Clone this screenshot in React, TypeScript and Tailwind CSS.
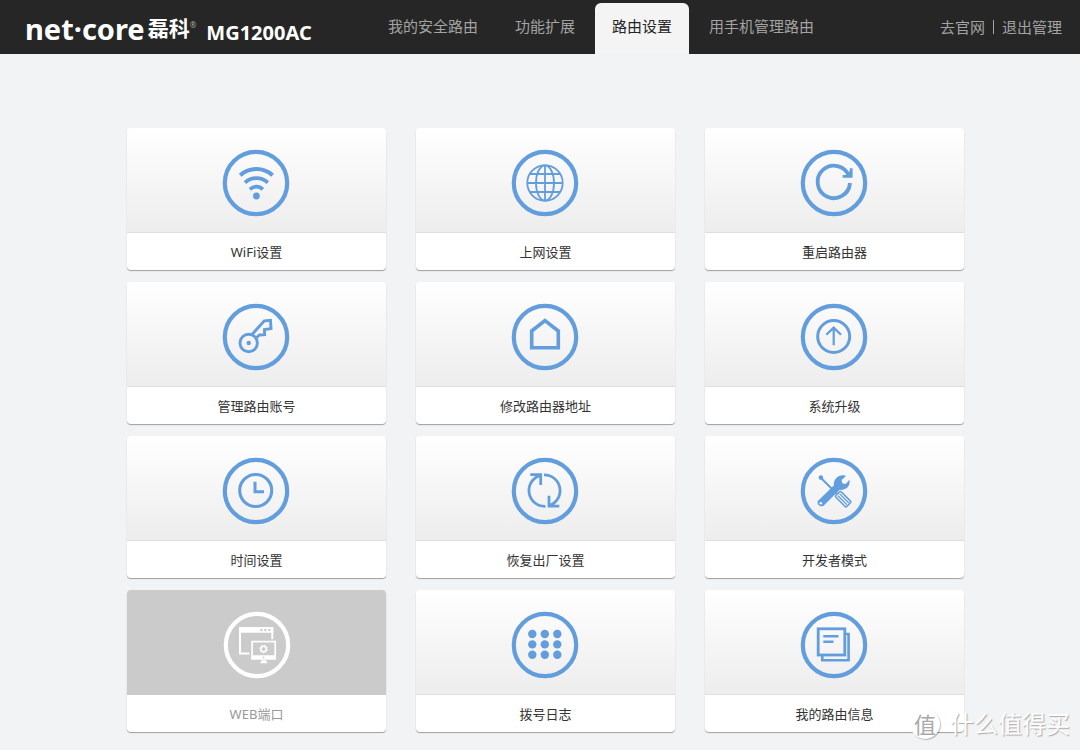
import type { ReactNode } from 'react';

const navItems = [
    { title: '我的安全路由', href: '#safe' },
    { title: '功能扩展', href: '#extend' },
    { title: '路由设置', href: '#settings', active: true },
    { title: '用手机管理路由', href: '#mobile' },
];

// all icons are drawn on a 68x68 canvas, the outer ring is shared
const icons: Record<string, ReactNode> = {
    wifi: (
        <>
            <path d="M18.2 26.2A24.3 24.3 0 0 1 50.6 26.2" strokeWidth="4" />
            <path d="M23 33.6A17 17 0 0 1 45.8 33.6" strokeWidth="3.8" />
            <path d="M28 40.4A8.8 8.8 0 0 1 40.8 40.4" strokeWidth="3.8" />
            <circle cx="34.4" cy="47" r="3.4" fill="currentColor" stroke="none" />
        </>
    ),
    globe: (
        <g strokeWidth="1.8">
            <circle cx="34" cy="34" r="17.7" />
            <ellipse cx="34" cy="34" rx="9" ry="17.7" />
            <path d="M34 16.3V51.7M16.3 34H51.7M19 25H49M19 43H49" />
        </g>
    ),
    restart: (
        <>
            <path d="M50 34A16.2 16.2 0 1 1 49 27.2" strokeWidth="3.8" />
            <path d="M51.2 19.3V27.3H42.7" strokeWidth="2.8" />
            <path d="M50.5 21.5V27H44.5Z" fill="currentColor" stroke="none" />
        </>
    ),
    key: (
        <g strokeWidth="2.9">
            <circle cx="26.7" cy="40" r="8.7" />
            <circle cx="26.7" cy="40" r="2.2" fill="currentColor" stroke="none" />
            <path d="M30 31.5L42.3 17.8L48.5 17.4L49 25.6L42.5 26.6L42.6 31.6L37.5 32L34 35" />
        </g>
    ),
    house: <path d="M34 17.6L47.3 28V44.7H20.7V28Z" strokeWidth="3.6" />,
    upgrade: (
        <>
            <circle cx="33.7" cy="33.5" r="16" strokeWidth="3" />
            <path d="M33.7 42.3V25M26.3 31.8L33.7 24.6L41 31.8" strokeWidth="2.2" />
        </>
    ),
    clock: (
        <>
            <circle cx="33.7" cy="33.5" r="16" strokeWidth="3.1" />
            <path d="M33 24.7V34.8H42" strokeWidth="3" />
        </>
    ),
    reset: (
        <g strokeWidth="2.8">
            <path d="M19.3 17.6H29.7V28M29.5 18.3A15.8 15.8 0 0 0 34.5 49.3" />
            <path d="M48.3 49.2H38V38.7M38.2 48.6A15.8 15.8 0 0 0 33 17.8" />
        </g>
    ),
    tools: (
        <>
            <path d="M21 21L37 37" strokeWidth="2" />
            <circle cx="20.9" cy="20.6" r="2.3" fill="currentColor" stroke="none" />
            <g transform="rotate(45 43 42)" strokeWidth="1.5">
                <rect x="35.5" y="38.2" width="15.5" height="7.6" rx="1.2" />
                <path d="M37 40.7H50M37 43.3H50" strokeWidth="1.3" />
            </g>
            <path
                d="M17.6 44.2L33.8 28.4C33.4 22.4 37.8 17.6 44 18.2L46 19.1L41.6 22.9L42.3 26.3L45.7 27L49.4 22.8C50.6 28.6 46.8 33.4 39.4 32.9L23.6 48.8A4.2 4.2 0 0 1 17.6 44.2Z"
                fill="currentColor"
                stroke="none"
            />
            <circle cx="20.8" cy="46.2" r="1.3" fill="#f8f8f8" stroke="none" />
        </>
    ),
    web: (
        <>
            <path d="M49.3 28.3V17.3H17V42.6H26.5" strokeWidth="2" />
            <path d="M16 16.3H50.3V21.8H16Z" fill="currentColor" stroke="none" />
            <path d="M37.2 19H39.4M41.2 19H43.4M45.3 19H47.5" stroke="#cbcbcb" strokeWidth="1.8" />
            <rect x="29.1" y="30.6" width="23.1" height="17" strokeWidth="1.7" />
            <path d="M28.3 44.3H53V48.5H28.3ZM38.5 49.3H43L44.3 52.3H37.2Z" fill="currentColor" stroke="none" />
            <circle cx="40.6" cy="46.4" r="0.9" fill="#cbcbcb" stroke="none" />
            <circle cx="40.6" cy="38" r="2.7" strokeWidth="1.5" />
            <circle cx="40.6" cy="38" r="3.8" strokeWidth="1" strokeDasharray="1.5 1.48" />
        </>
    ),
    dial: (
        <g fill="currentColor" stroke="none">
            {[23, 33.4, 43.8].map((y) => [21.3, 33.8, 46.3].map((x) => <circle key={x + '-' + y} cx={x} cy={y} r="4.2" />))}
        </g>
    ),
    info: (
        <>
            <rect x="18.2" y="17.8" width="26.6" height="26.2" strokeWidth="2.8" />
            <path d="M46 23H48.6V49.3H22.3V45" strokeWidth="2.6" />
            <path d="M23.3 25.2H38.5M23.3 30.7H33.5" strokeWidth="2.5" />
        </>
    ),
};

const cards = [
    { title: 'WiFi设置', icon: 'wifi' },
    { title: '上网设置', icon: 'globe' },
    { title: '重启路由器', icon: 'restart' },
    { title: '管理路由账号', icon: 'key' },
    { title: '修改路由器地址', icon: 'house' },
    { title: '系统升级', icon: 'upgrade' },
    { title: '时间设置', icon: 'clock' },
    { title: '恢复出厂设置', icon: 'reset' },
    { title: '开发者模式', icon: 'tools' },
    { title: 'WEB端口', icon: 'web', disabled: true },
    { title: '拨号日志', icon: 'dial' },
    { title: '我的路由信息', icon: 'info' },
];

function Header() {
    return (
        <header className="flex h-[54px] bg-[#262626] text-[15px] text-[#a3a3a3]">
            <div className="flex w-[371px] shrink-0 items-center pt-1 pl-[25px] text-white">
                <span className="text-[29px] leading-[50px] font-bold">net·core</span>
                <span className="ml-[3px] text-[21px] font-bold">磊科</span>
                <sup className="text-[8px] text-[#a3a3a3]">®</sup>
                <h1 className="ml-[10px] pt-2 text-[20px] leading-6 font-bold">MG1200AC</h1>
            </div>
            <nav className="flex gap-[3px] pt-[3px] whitespace-nowrap">
                {navItems.map((item) => (
                    <a
                        key={item.href}
                        href={item.href}
                        className={
                            item.active
                                ? 'flex items-center rounded-t-md bg-[#f4f4f5] px-[17px] pb-1 text-[#262626]'
                                : 'flex items-center px-[17px] pb-1'
                        }
                    >
                        {item.title}
                    </a>
                ))}
            </nav>
            <div className="ml-auto flex items-center gap-2 pr-[18px] whitespace-nowrap">
                <a href="#site">去官网</a>
                <span className="h-[14px] w-px bg-[#a3a3a3]"></span>
                <a href="#logout">退出管理</a>
            </div>
        </header>
    );
}

function Card({ title, icon, disabled }: { title: string; icon: string; disabled?: boolean }) {
    return (
        <a
            href={'#' + icon}
            aria-disabled={disabled}
            className="block overflow-hidden rounded-[4px] bg-white shadow-[0_1px_1px_rgba(0,0,0,0.35)]"
        >
            <div
                className={
                    disabled
                        ? 'flex h-[105px] justify-center border-b border-[#cbcbcb] bg-[#cbcbcb] pt-[21px] text-white'
                        : 'flex h-[105px] justify-center border-b border-[#dedede] bg-linear-to-b from-white to-[#ededed] pt-[21px] pr-[2px] text-[#629ddd]'
                }
            >
                <svg width="68" height="68" viewBox="0 0 68 68" fill="none" stroke="currentColor" aria-hidden="true">
                    <circle cx="34" cy="34" r="31.2" strokeWidth="4.2" />
                    {icons[icon]}
                </svg>
            </div>
            <p className={disabled ? 'pt-px text-center text-[13px] leading-9 text-[#999]' : 'pt-px text-center text-[13px] leading-9 text-[#333]'}>
                {title}
            </p>
        </a>
    );
}

export default function App() {
    return (
        <div className="relative min-h-screen bg-[#f1f3f5] font-['Noto_Sans','Noto_Sans_CJK_SC',sans-serif]">
            <Header />
            <main className="mx-auto w-full max-w-[848px] pt-[74px] pb-4 pl-[11px]">
                <div className="grid grid-cols-3 gap-x-[30px] gap-y-3">
                    {cards.map((card) => (
                        <Card key={card.icon} {...card} />
                    ))}
                </div>
            </main>
            <div className="absolute right-[10px] bottom-[10px] flex items-center gap-[10px]">
                <span className="flex size-[30px] items-center justify-center rounded-full bg-white text-[22px] leading-none text-[#aaa] shadow-[1px_1px_1px_rgba(0,0,0,0.25)]">
                    值
                </span>
                <span className="text-[24px] leading-8 text-white [text-shadow:1px_1px_1px_#aaa]">什么值得买</span>
            </div>
        </div>
    );
}
